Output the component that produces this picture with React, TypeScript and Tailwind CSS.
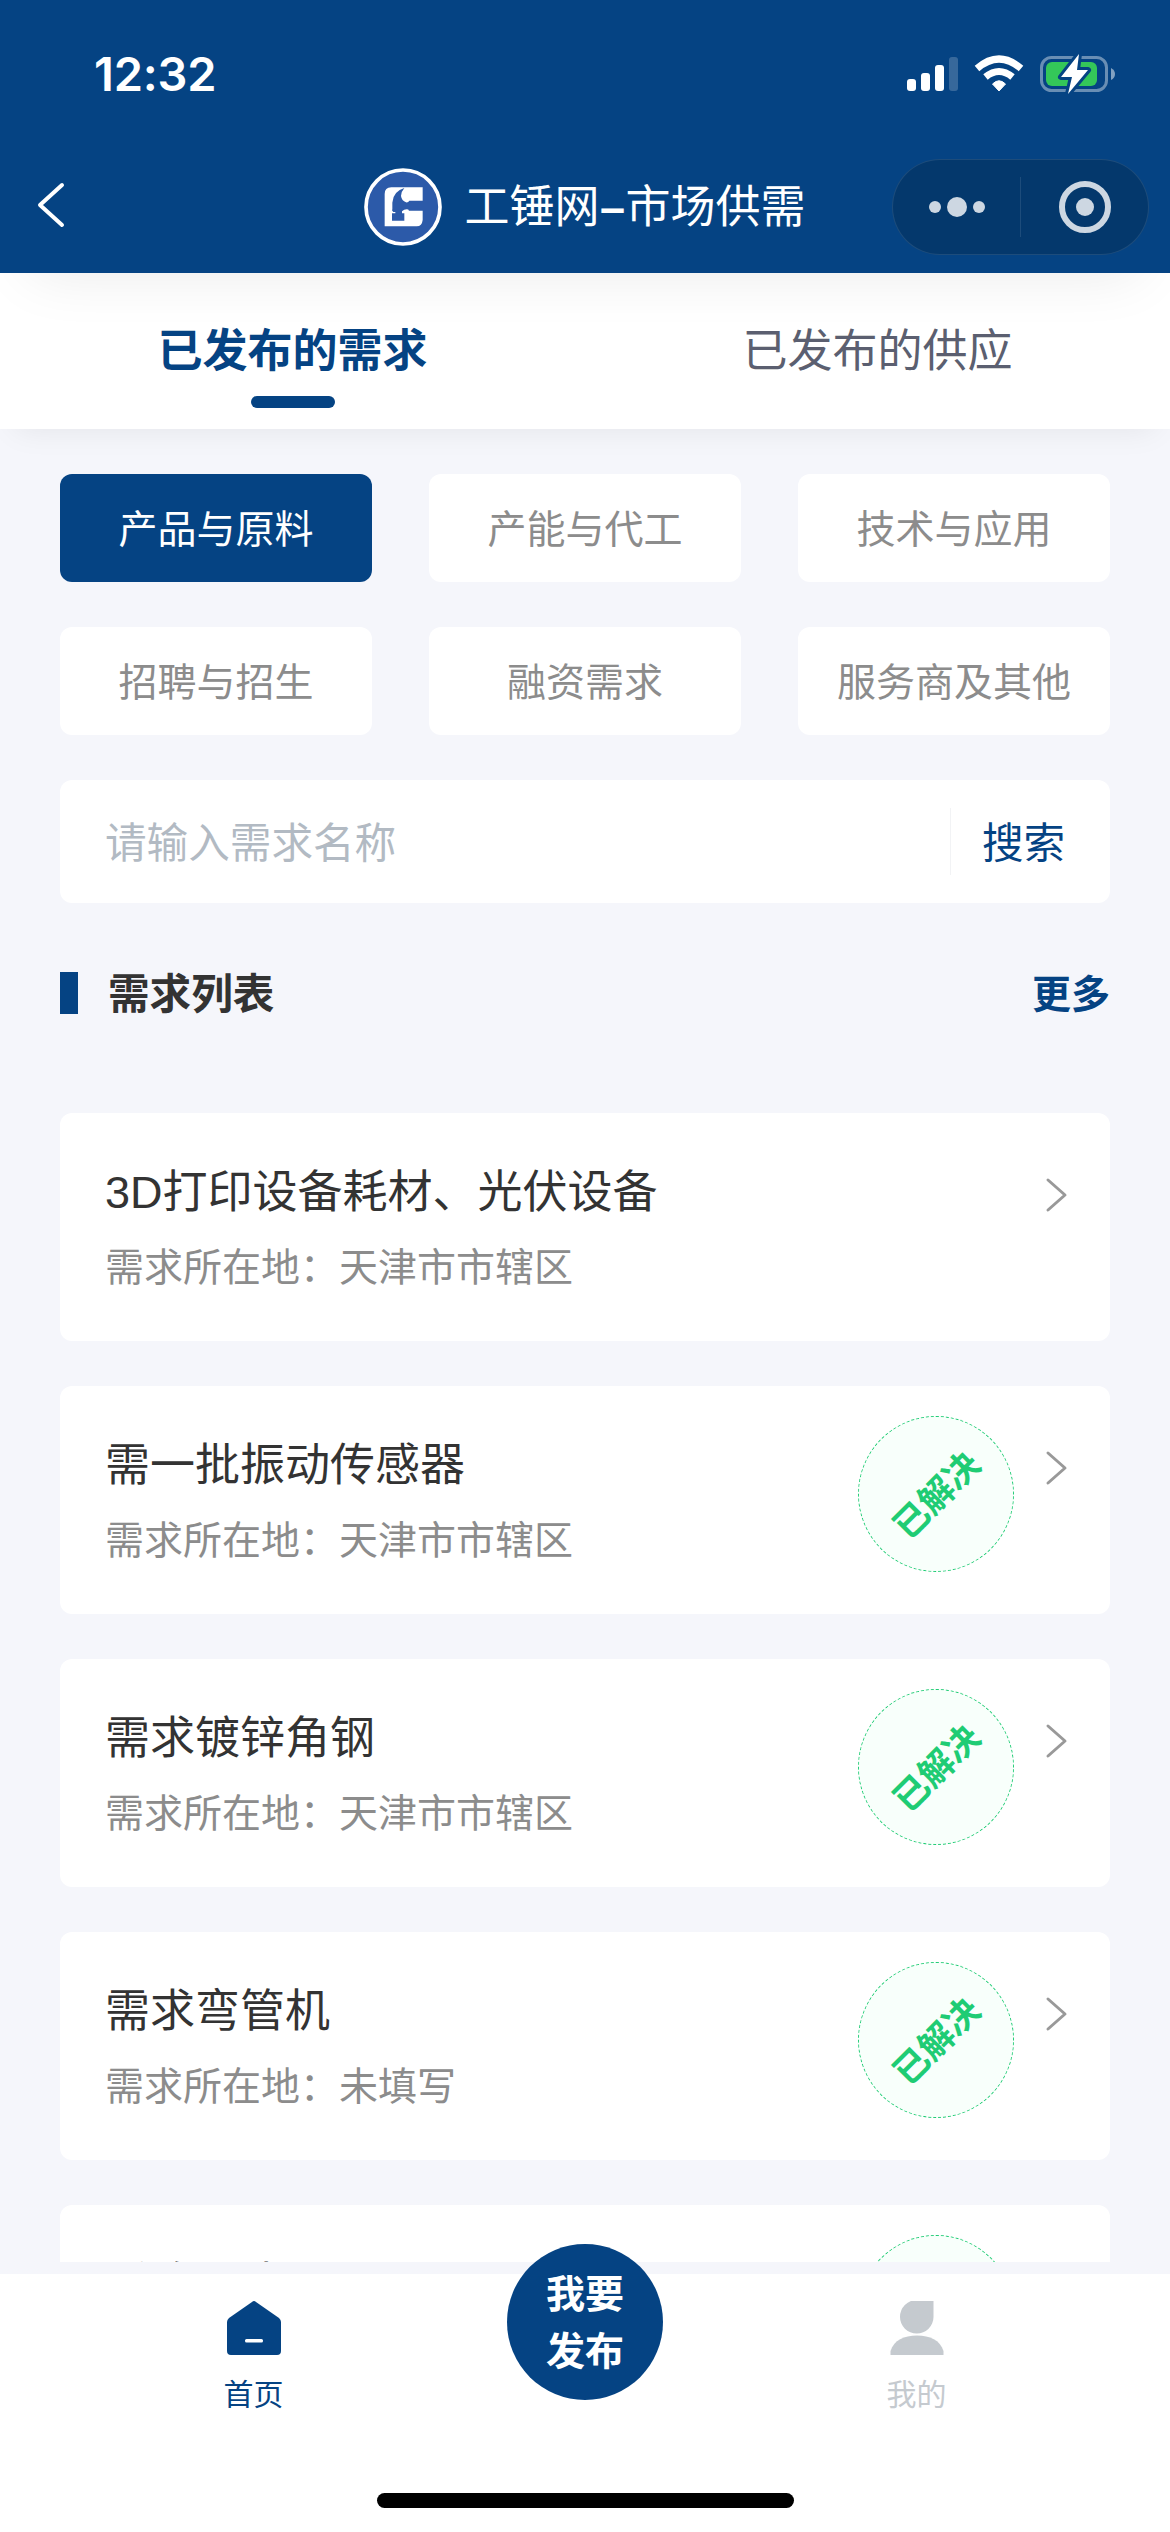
import { useState } from 'react'
import clsx from 'clsx'

const CATEGORIES = ['产品与原料', '产能与代工', '技术与应用', '招聘与招生', '融资需求', '服务商及其他']

type Demand = { id: number; title: string; place?: string; solved: boolean }

const DEMANDS: Demand[] = [
  { id: 1, title: '3D打印设备耗材、光伏设备', place: '天津市市辖区', solved: false },
  { id: 2, title: '需一批振动传感器', place: '天津市市辖区', solved: true },
  { id: 3, title: '需求镀锌角钢', place: '天津市市辖区', solved: true },
  { id: 4, title: '需求弯管机', place: '未填写', solved: true },
  { id: 5, title: '采购叶片', solved: true },
]

function StatusBar() {
  return (
    <div className="flex h-[147px] items-start justify-between pl-[94px] pr-[55px]">
      <span className="mt-[44px] font-['Inter'] text-[47px] leading-[60px] font-semibold tracking-[-0.2px]">12:32</span>
      <svg className="mt-[54px] h-[40px] w-[208px]" viewBox="907 54 208 40" fill="none">
        <g fill="#fff">
          <rect x="907" y="79" width="9" height="12" rx="3" />
          <rect x="921" y="73" width="9" height="18" rx="3" />
          <rect x="935" y="65" width="9" height="26" rx="3" />
          <rect x="949" y="57" width="9" height="34" rx="3" opacity="0.2" />
        </g>
        {/* Wifi */}
        <path d="M999 91 L992.5 84 Q999 77.5 1005.500 84 Z" fill="#fff" stroke="#fff" strokeWidth="1" strokeLinejoin="round" />
        <path d="M985.500 77 Q999 66 1012.500 77" stroke="#fff" strokeWidth="7" />
        <path d="M977 68.500 Q999 49.500 1021 68.500" stroke="#fff" strokeWidth="7" />
        {/* Battery */}
        <rect x="1041.500" y="57.500" width="65" height="33" rx="10" stroke="#fff" strokeOpacity="0.4" strokeWidth="3" />
        <rect x="1046" y="62" width="51" height="24" rx="6" fill="#34c759" />
        <path d="M1111 68 Q1115 70 1115 74 Q1115 78 1111 80 Z" fill="#fff" fillOpacity="0.5" />
        <path
          d="M1079 54 L1061 77 H1072 L1068 94 L1088 70 H1077 Z"
          fill="#fff"
          stroke="#054383"
          strokeWidth="6"
          strokeLinejoin="round"
          paintOrder="stroke"
        />
      </svg>
    </div>
  )
}

function Logo() {
  return (
    <svg className="h-[78px] w-[78px]" viewBox="42 54 234 234">
      <circle cx="159" cy="171" r="111" fill="#2c5aa9" stroke="#fff" strokeWidth="11" />
      <path
        fill="#fff"
        d="M104 132 Q104 112 124 112 H218 V152 H178 Q175 158 168 157 Q155 152 153 138 Q154 124 163 114 Q129 124 127 158 V177 Q124 181 130 186 H136 V190 H126 V212 H163 V190 H156 V184 Q162 178 170 178 Q176 178 177 182 H218 V210 Q216 229 200 229 H104 Z"
      />
    </svg>
  )
}

function Header() {
  return (
    <header className="relative h-[273px] shrink-0 bg-[#054383] text-white">
      <StatusBar />
      <div className="flex h-[120px] items-center justify-center">
        <Logo />
        <h1 className="mb-[3px] ml-[22px] text-[45px] leading-[60px] font-normal">
          工锤网<span className="inline-block w-[26px] text-center font-['Liberation_Sans'] font-bold">–</span>市场供需
        </h1>
      </div>
      <button className="absolute top-[181px] left-[36px]" aria-label="返回">
        <svg className="h-[48px] w-[30px]" viewBox="0 0 30 48" fill="none" stroke="#fff" strokeWidth="4" strokeLinecap="round" strokeLinejoin="round">
          <path d="M26 4 L4 24 L26 44" />
        </svg>
      </button>
      <div className="absolute top-[159px] right-[21px] flex h-[96px] w-[257px] items-center rounded-full border border-white/10 bg-[#04386c]">
        <div className="flex flex-1 items-center justify-center gap-[6px]">
          <i className="size-[12px] rounded-full bg-[#cdd7e2]" />
          <i className="size-[20px] rounded-full bg-[#cdd7e2]" />
          <i className="size-[12px] rounded-full bg-[#cdd7e2]" />
        </div>
        <div className="h-[60px] w-px bg-white/10" />
        <div className="flex flex-1 justify-center">
          <div className="flex size-[52px] items-center justify-center rounded-full border-[6px] border-[#cdd7e2]">
            <i className="size-[18px] rounded-full bg-[#cdd7e2]" />
          </div>
        </div>
      </div>
    </header>
  )
}

function Tabs({ active, onChange }: { active: number; onChange: (i: number) => void }) {
  return (
    <div className="relative z-10 h-[156px] shrink-0 bg-white shadow-[0_15px_30px_-15px_rgba(0,0,0,0.08)]">
      <div className="h-full overflow-hidden">
        {/* soft shade thrown by the header */}
        <div className="-mt-[200px] h-[200px] shadow-[0_30px_60px_-30px_rgba(0,0,0,0.09)]" />
        <div className="relative grid h-[156px] grid-cols-2">
          {['已发布的需求', '已发布的供应'].map((label, i) => (
            <button key={label} onClick={() => onChange(i)} className="flex flex-col items-center pt-[45px]">
              <span
                className={clsx(
                  'text-[45px] leading-[60px]',
                  active === i ? 'font-bold text-[#054383]' : 'text-[#5b5f70]',
                )}
              >
                {label}
              </span>
              {active === i && <span className="mt-[18px] h-[12px] w-[84px] rounded-full bg-[#054383]" />}
            </button>
          ))}
        </div>
      </div>
    </div>
  )
}

function SolvedStamp() {
  return (
    <div className="mt-[30px] flex size-[156px] items-center justify-center rounded-full border border-dashed border-[#1fcc74] bg-[#f8fffb]">
      <span className="-rotate-45 pb-[2px] text-[35px] leading-[38px] font-bold whitespace-nowrap text-[#1fcc74]">已解决</span>
    </div>
  )
}

function DemandCard({ title, place, solved }: Omit<Demand, 'id'>) {
  return (
    <div className="flex h-[228px] shrink-0 items-start rounded-[12px] bg-white pr-[42px] pl-[45px]">
      <div className="flex-1 pt-[50px]">
        <p className="font-['Liberation_Sans','Noto_Sans_CJK_SC',sans-serif] text-[45px] leading-[60px] text-[#333]">{title}</p>
        {place && <p className="mt-[11px] text-[39px] leading-[60px] text-[#8c8c8c]">需求所在地：{place}</p>}
      </div>
      {solved && <SolvedStamp />}
      <svg className="mt-[64px] ml-[31px] h-[36px] w-[23px]" viewBox="0 0 23 36" fill="none" stroke="#999" strokeWidth="3" strokeLinecap="round" strokeLinejoin="round">
        <path d="M3 3 L20 18 L3 33" />
      </svg>
    </div>
  )
}

function BottomNav() {
  return (
    <nav className="relative h-[258px] shrink-0 bg-white">
      <div className="flex justify-between pr-[193px] pl-[193px]">
        <div className="flex w-[121px] flex-col items-center pt-[27px] text-[#054383]">
          <svg className="h-[54px] w-[54px]" viewBox="0 0 54 54">
            <path fill="currentColor" d="M25 1 Q27 -1 29 1 L52 17 Q54 19 54 21 V50 Q54 54 50 54 H4 Q0 54 0 50 V21 Q0 19 2 17 Z" />
            <rect x="18" y="38" width="18" height="3.500" rx="1.500" fill="#fff" />
          </svg>
          <span className="mt-[17px] text-[30px] leading-[40px]">首页</span>
        </div>
        <div className="flex w-[121px] flex-col items-center pt-[27px] text-[#c5cacf]">
          <svg className="h-[54px] w-[54px]" viewBox="0 0 54 54" fill="currentColor">
            <path d="M26.500 -1 H43.500 V16 A16.750 16.500 0 0 1 10 16 A16.750 17 0 0 1 26.500 -1 Z" />
            <path d="M0.500 54 V50 C4 39 14 34.500 27 34.500 C40 34.500 50 39 53.500 50 V54 Z" />
          </svg>
          <span className="mt-[17px] text-[30px] leading-[40px]">我的</span>
        </div>
      </div>
      <button className="absolute -top-[30px] left-[507px] flex size-[156px] items-center justify-center rounded-full bg-[#054383] pb-[5px] text-[39px] leading-[57px] font-bold text-white">
        <span>
          我要
          <br />
          发布
        </span>
      </button>
      <div className="absolute bottom-[24px] left-[377px] h-[15px] w-[417px] rounded-full bg-black" />
    </nav>
  )
}

export default function App() {
  const [tab, setTab] = useState(0)
  const [category, setCategory] = useState(0)

  return (
    <div className="flex h-[2532px] w-[1170px] flex-col overflow-hidden bg-[#f5f6fb] font-['Noto_Sans_CJK_SC',sans-serif]">
      <Header />
      <Tabs active={tab} onChange={setTab} />

      <main className="mb-[12px] flex h-[1833px] shrink-0 flex-col overflow-hidden px-[60px] pt-[45px]">
        <div className="grid shrink-0 grid-cols-3 gap-x-[57px] gap-y-[45px]">
          {CATEGORIES.map((name, i) => (
            <button
              key={name}
              onClick={() => setCategory(i)}
              className={clsx(
                'h-[108px] rounded-[12px] pb-[5px] text-[39px] leading-[60px] whitespace-nowrap',
                category === i ? 'bg-[#054383] text-white' : 'bg-white text-[#8c8c8c]',
              )}
            >
              {name}
            </button>
          ))}
        </div>

        {/* Search */}
        <div className="mt-[45px] flex h-[123px] shrink-0 items-center rounded-[12px] bg-white pl-[45px] text-[41.600px]">
          <input className="mb-[3px] h-[60px] min-w-0 flex-1 outline-none placeholder:text-[#b2bac3]" placeholder="请输入需求名称" />
          <div className="h-[67px] w-px bg-[#f2f3f5]" />
          <button className="w-[159px] pr-[14px] pb-[4px] leading-[60px] text-[#054383]">搜索</button>
        </div>

        <div className="mt-[60px] flex h-[60px] shrink-0 items-center">
          <span className="h-[42px] w-[18px] bg-[#054383]" />
          <h2 className="mb-[5px] ml-[30px] flex-1 text-[41.600px] leading-[60px] font-bold text-[#333]">需求列表</h2>
          <a className="mb-[5px] text-[39px] leading-[60px] font-bold text-[#054383]">更多</a>
        </div>

        <div className="mt-[90px] flex flex-col gap-[45px]">
          {DEMANDS.map((d) => (
            <DemandCard key={d.id} title={d.title} place={d.place} solved={d.solved} />
          ))}
        </div>
      </main>

      <BottomNav />
    </div>
  )
}
